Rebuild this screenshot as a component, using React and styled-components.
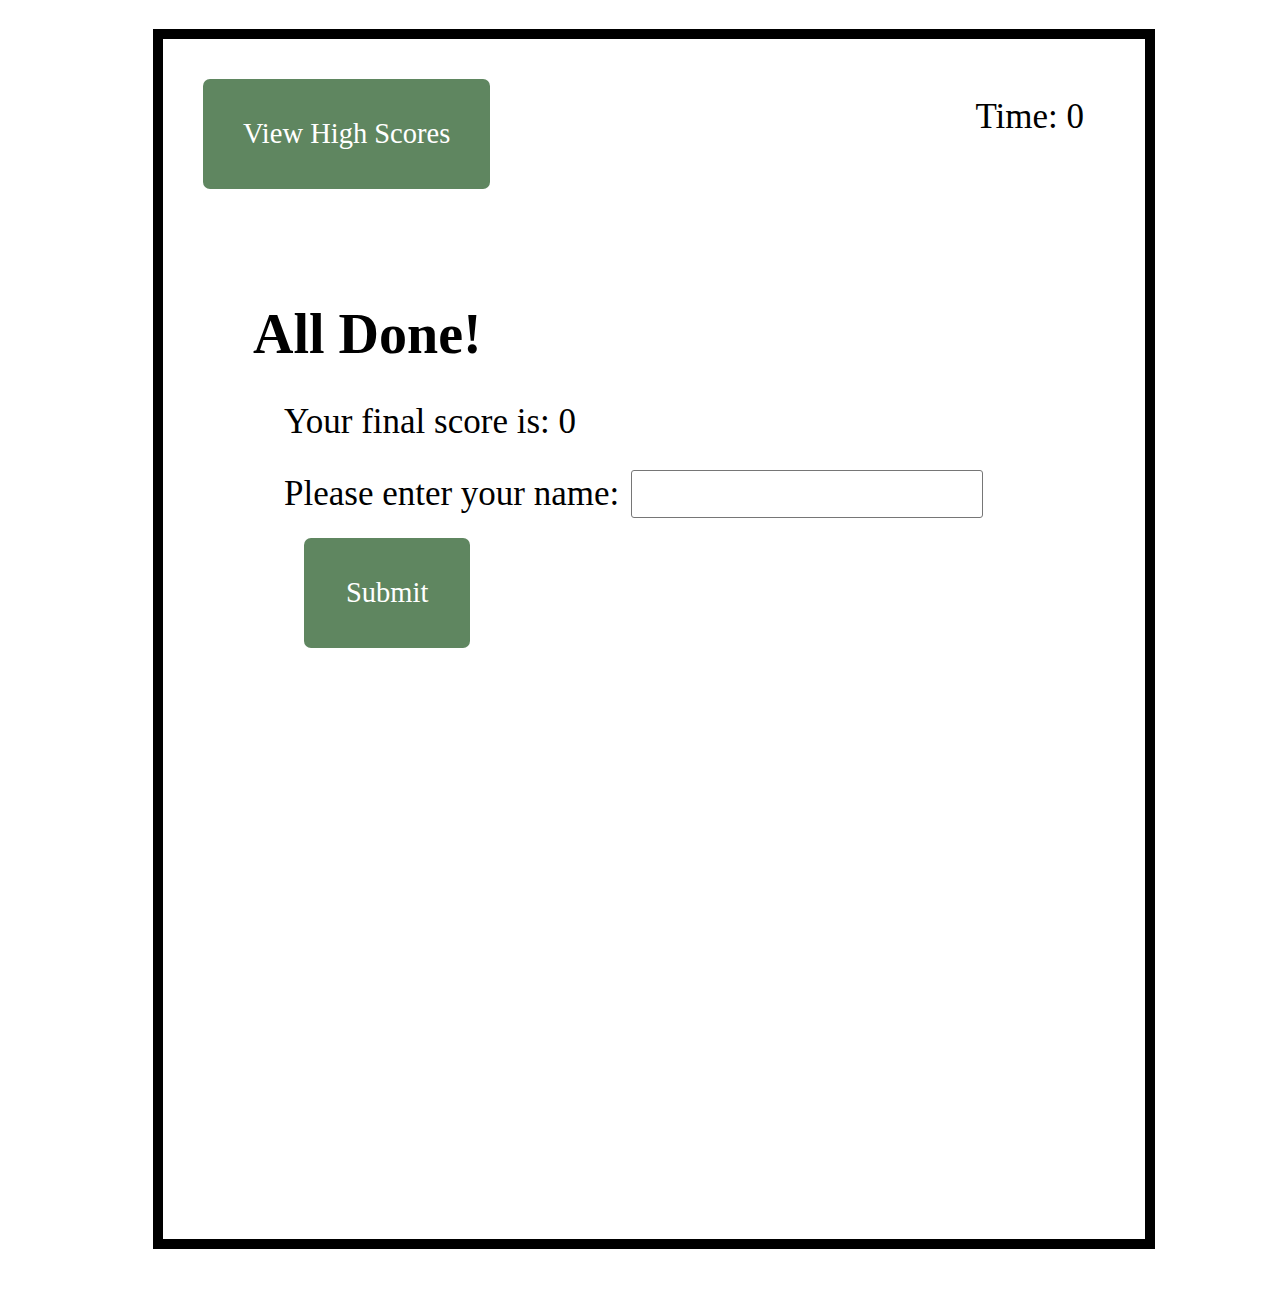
import React from "react";
import styled, { createGlobalStyle } from "styled-components";

const Global = createGlobalStyle`
  html, body { margin: 0; padding: 0; background: #fff; }
  body { font-family: "Liberation Serif", "Times New Roman", serif; color: #000; }
`;

const Frame = styled.div`
  box-sizing: border-box;
  width: 1002px;
  height: 1220px;
  margin: 29px 0 0 153px;
  border: 10px solid #000;
  padding: 40px 61px 0 40px;
`;

const Header = styled.header`
  display: flex;
  justify-content: space-between;
  align-items: flex-start;
`;

const GreenButton = styled.button`
  box-sizing: border-box;
  height: 110px;
  padding: 0 ${(p) => p.$padX}px;
  background: #5f8660;
  color: #fff;
  border: none;
  border-radius: 7px;
  font-family: "Liberation Serif", "Times New Roman", serif;
  font-size: 28.5px;
  cursor: pointer;
`;

const Timer = styled.div`
  font-size: 35px;
  line-height: 38px;
  margin-top: 19px;
`;

const Main = styled.main`
  padding-left: 50px;
  margin-top: 114px;
`;

const Title = styled.h1`
  font-size: 56px;
  font-weight: bold;
  margin: 0;
  line-height: 62px;
`;

const Body = styled.div`
  padding-left: 31px;
  margin-top: 38px;
  font-size: 35px;
`;

const Line = styled.p`
  margin: 0;
  line-height: 38px;
`;

const NameRow = styled.label`
  display: flex;
  align-items: center;
  gap: 12px;
  margin-top: 29px;
  line-height: 38px;
`;

const NameInput = styled.input`
  box-sizing: border-box;
  width: 352px;
  height: 48px;
  border: 1px solid #767676;
  border-radius: 3px;
  font-size: 20px;
  padding: 0 6px;
`;

const SubmitWrap = styled.div`
  padding-left: 20px;
  margin-top: 20px;
`;

export default function App() {
  return (
    <>
      <Global />
      <Frame>
        <Header>
          <GreenButton $padX={40}>View High Scores</GreenButton>
          <Timer>Time: 0</Timer>
        </Header>
        <Main>
          <Title>All Done!</Title>
          <Body>
            <Line>Your final score is: 0</Line>
            <NameRow>
              Please enter your name:
              <NameInput type="text" />
            </NameRow>
            <SubmitWrap>
              <GreenButton $padX={42}>Submit</GreenButton>
            </SubmitWrap>
          </Body>
        </Main>
      </Frame>
    </>
  );
}
